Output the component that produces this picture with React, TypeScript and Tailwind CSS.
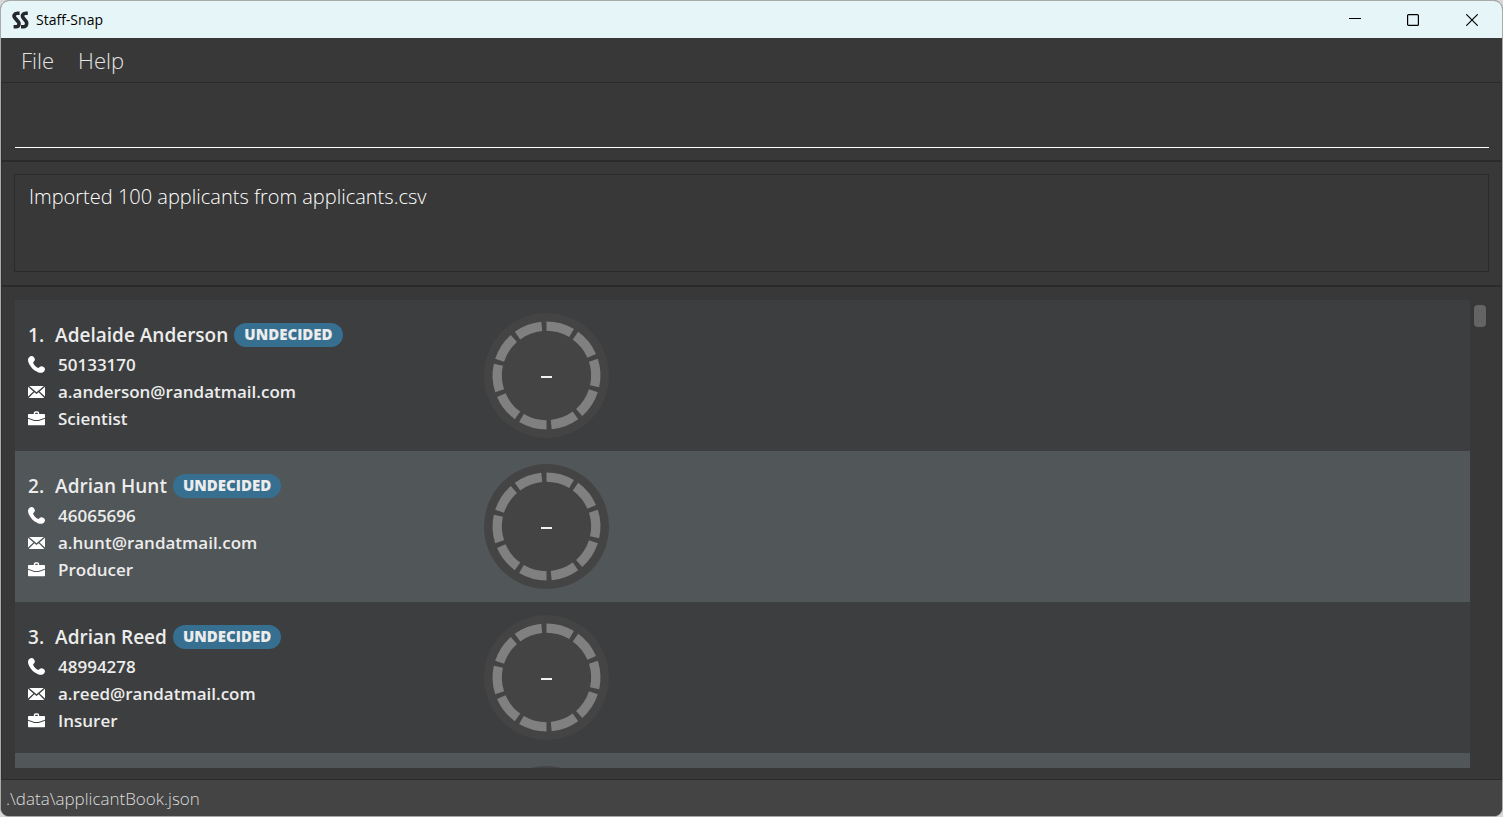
import type { ReactNode } from "react";

type Applicant = { name: string; phone: string; email: string; position: string };

const applicants: Applicant[] = [
  { name: "Adelaide Anderson", phone: "50133170", email: "a.anderson@randatmail.com", position: "Scientist" },
  { name: "Adrian Hunt", phone: "46065696", email: "a.hunt@randatmail.com", position: "Producer" },
  { name: "Adrian Reed", phone: "48994278", email: "a.reed@randatmail.com", position: "Insurer" },
];

function Logo() {
  return (
    <svg width="17" height="18" viewBox="0 0 17 18" fill="none" stroke="#24282b" strokeWidth="3.6" strokeLinejoin="round" aria-hidden="true">
      <path d="M7.6 2.300H5.200C2.400 2.300 1.200 5 2.800 6.800L6.200 10.700C7.800 12.700 6.900 15.700 4.400 15.700H1.600" />
      <path d="M15.800 2.300H13.600C10.800 2.300 9.600 5 11.200 6.800L13.900 10.200C15.500 12.300 14.400 15.700 11.800 15.700H9" />
    </svg>
  );
}

function PhoneIcon() {
  return (
    <svg width="17" height="17" viewBox="0 0 17 17" fill="#fff" aria-hidden="true">
      <path d="M1.600.8C3-.3 4.900-.1 5.900 1.200C7 2.600 7.300 3.800 6.300 4.900C5.500 5.800 5 6.300 5.200 7C5.900 8.900 7.900 11 9.700 11.800C10.400 12.100 10.900 11.500 11.600 10.900C12.900 9.900 14.300 10.100 15.600 11C17.200 12.100 17.400 13.900 16.200 15.300C14.800 17 12.800 17.200 10.400 16.400C6 14.900 2 10.800.5 6.600C-.3 4.200-.2 2.200 1.600.8Z" />
    </svg>
  );
}

function MailIcon() {
  return (
    <svg width="17" height="12" viewBox="0 0 17 12" fill="#fff" aria-hidden="true">
      <path d="M1.200 0H15.800L8.500 6.200Z" />
      <path d="M0 .7L5.400 5.400L0 10.600Z" />
      <path d="M17 .7L11.600 5.400L17 10.600Z" />
      <path d="M6.300 6.200L8.500 8.100L10.700 6.200L16.300 12H.7Z" />
    </svg>
  );
}

function BriefcaseIcon() {
  return (
    <svg width="17" height="15" viewBox="0 0 17 15" aria-hidden="true">
      <path d="M6.500 3.200V2.200Q6.500 1 7.700 1H9.300Q10.500 1 10.500 2.200V3.200" fill="none" stroke="#fff" strokeWidth="1.400" />
      <path d="M0 3.600Q0 2.900.7 2.900H16.300Q17 2.900 17 3.600V6.800L10.500 8.900H6.500L0 6.800Z" fill="#fff" />
      <path d="M0 7.800L6.300 9.900H10.700L17 7.800V13.600Q17 14.300 16.300 14.300H.7Q0 14.300 0 13.600Z" fill="#fff" />
    </svg>
  );
}

function Gauge() {
  return (
    <svg width="125" height="125" viewBox="0 0 125 125" className="block shrink-0" role="img" aria-label="No score">
      <circle cx="62.5" cy="62.5" r="62.5" fill="#444" />
      {Array.from({ length: 10 }, (_, i) => (
        <path
          key={i}
          d="M62.5 13.2A49.3 49.3 0 0 1 87.52 20.02"
          fill="none"
          stroke="#808080"
          strokeWidth="9.3"
          transform={`rotate(${i * 36} 62.5 62.5)`}
        />
      ))}
      <rect x="57" y="63" width="11" height="2" fill="#f2f2f2" />
    </svg>
  );
}

function Detail({ icon, text }: { icon: ReactNode; text: string }) {
  return (
    <div className="flex h-[27px] items-center gap-[13px]">
      <span className="flex w-[17px] justify-center">{icon}</span>
      <span>{text}</span>
    </div>
  );
}

function ApplicantCard({ index, applicant }: { index: number; applicant?: Applicant }) {
  return (
    <li className="flex h-[151px] shrink-0 items-start pt-[13px] pl-[13px] odd:bg-[#3c3e3f] even:bg-[#515658]">
      <div className="w-[456px] pt-[7px] text-[17px] leading-[27px] font-semibold text-[#ececec]">
        {applicant && (
          <>
            <div className="mb-px flex h-[30px] items-center text-[19px]">
              <span className="pr-[11px]">{index}.</span>
              <h2>{applicant.name}</h2>
              <span className="ml-[6px] flex h-6 items-center rounded-full bg-[#366f90] px-[10px] pb-px text-[15px] font-extrabold">
                UNDECIDED
              </span>
            </div>
            <Detail icon={<PhoneIcon />} text={applicant.phone} />
            <Detail icon={<MailIcon />} text={applicant.email} />
            <Detail icon={<BriefcaseIcon />} text={applicant.position} />
          </>
        )}
      </div>
      <Gauge />
    </li>
  );
}

export default function App() {
  return (
    <div className="h-screen bg-[#d8d8d8] font-['Open_Sans','Noto_Sans',sans-serif]">
      <div className="flex h-full flex-col overflow-hidden rounded-[9px] border border-[#a9abab] bg-[#383838]">
        <header className="flex h-[37px] shrink-0 items-center bg-[#e6f6f8] pl-[11px] text-black">
          <Logo />
          <h1 className="flex-1 pl-[7px] text-[14px]">Staff-Snap</h1>
          <button aria-label="Minimize" className="flex h-full w-[58px] items-center justify-center">
            <svg width="12" height="12" viewBox="0 0 12 12" stroke="#000"><path d="M0 4.500H12" /></svg>
          </button>
          <button aria-label="Maximize" className="flex h-full w-[58px] items-center justify-center">
            <svg width="12" height="12" viewBox="0 0 12 12" fill="none" stroke="#000" strokeWidth="1.200"><rect x=".6" y=".6" width="10.800" height="10.800" rx="1" /></svg>
          </button>
          <button aria-label="Close" className="flex h-full w-[60px] items-center justify-center">
            <svg width="12" height="12" viewBox="0 0 12 12" stroke="#000" strokeWidth="1.200"><path d="M.3.3L11.700 11.700M11.700.3L.3 11.700" /></svg>
          </button>
        </header>

        <nav className="flex h-[45px] shrink-0 items-center gap-6 border-b border-[#2a2a2a] px-5 text-[22px] font-light text-[#e4e4e4]">
          <button>File</button>
          <button>Help</button>
        </nav>

        <main className="flex min-h-0 flex-1 flex-col border-x border-[#2f2f2f]">
          <section className="h-[79px] shrink-0 border-b-2 border-[#2a2a2a] pt-4 pr-3 pl-[13px]">
            <input
              aria-label="Command"
              className="block h-[49px] w-full border-b border-white bg-transparent text-[20px] font-light text-white outline-none"
            />
          </section>

          <section className="h-[125px] shrink-0 border-b-2 border-[#2a2a2a] px-3 pt-3">
            <output className="block h-[98px] border border-[#2a2a2a] px-[14px] pt-2 text-[20px] leading-7 font-light text-white">
              Imported 100 applicants from applicants.csv
            </output>
          </section>

          <section className="flex min-h-0 flex-1 pt-[13px] pb-[11px] pl-[13px]">
            <ul className="flex min-w-0 flex-1 flex-col overflow-hidden">
              {applicants.map((applicant, i) => (
                <ApplicantCard key={applicant.email} index={i + 1} applicant={applicant} />
              ))}
              <ApplicantCard index={applicants.length + 1} />
            </ul>
            <div className="w-[31px] pt-[5px] pl-1">
              <div className="h-[22px] w-3 rounded bg-[#646464]" />
            </div>
          </section>
        </main>

        <footer className="flex h-[37px] shrink-0 items-center border-t border-[#2a2a2a] bg-[#444] px-[5px] pt-px text-[17px] font-light text-[#dcdcdc]">
          .\data\applicantBook.json
        </footer>
      </div>
    </div>
  );
}
